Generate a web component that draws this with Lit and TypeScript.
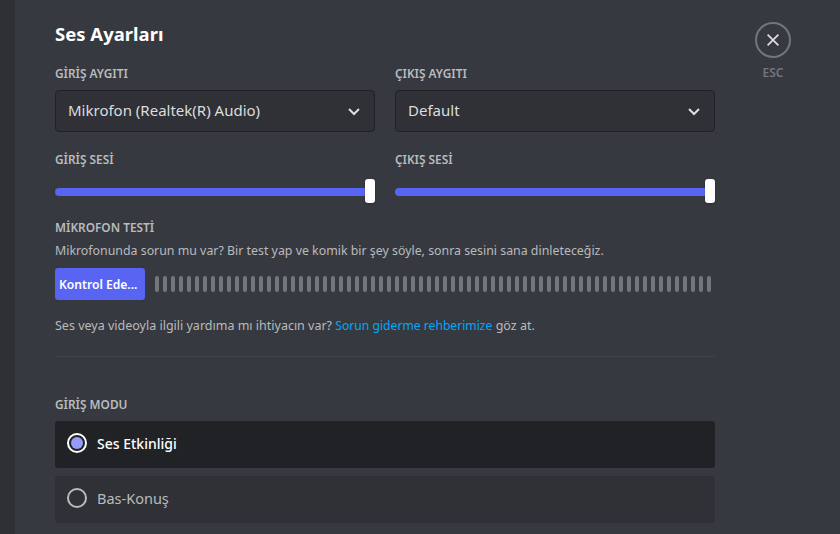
import { LitElement, html, css } from "lit";
import { customElement } from "lit/decorators.js";

const chevron = html`<svg class="chev" width="24" height="24" viewBox="0 0 24 24"><path fill="none" stroke="currentColor" stroke-width="2" d="M7 10l5 5 5-5"/></svg>`;

@customElement("app-root")
export class AppRoot extends LitElement {
  static styles = css`
    :host { display: block; width: 840px; height: 534px; overflow: hidden; background: #36393f; font-family: "Noto Sans", sans-serif; }
    * { box-sizing: border-box; }
    .page { display: flex; height: 534px; }
    .side { width: 15px; background: #2f3033; flex: none; }
    .main { width: 660px; margin-left: 40px; padding-top: 22px; flex: none; }
    .tools { margin-left: 40px; padding-top: 22px; width: 36px; display: flex; flex-direction: column; align-items: center; flex: none; }
    .close { width: 36px; height: 36px; border: 2px solid #72767d; border-radius: 50%; display: flex; align-items: center; justify-content: center; color: #dcddde; }
    .esc { margin-top: 7px; font-size: 12px; line-height: 16px; font-weight: 600; color: #72767d; }
    h1 { margin: 0; font-size: 18.5px; line-height: 24px; font-weight: 700; color: #fff; }
    .cols { display: grid; grid-template-columns: 320px 320px; gap: 20px; }
    .top { margin-top: 19px; }
    .label { font-size: 11.85px; line-height: 16px; font-weight: 600; color: #b9bbbe; }
    .select { margin-top: 9px; height: 42px; background: #2f3136; border: 1px solid #202225; border-radius: 4px; display: flex; align-items: center; justify-content: space-between; padding: 0 8px 2px 12px; font-size: 15px; color: #dcddde; }
    .chev { position: relative; top: 1px; }
    .vol { margin-top: 19px; }
    .slider { margin-top: 12px; height: 24px; position: relative; display: flex; align-items: center; }
    .track { width: 100%; height: 8px; border-radius: 4px; background: #5865f2; position: relative; top: 1px; }
    .grab { position: absolute; right: 0; top: 0; width: 10px; height: 24px; border-radius: 3px; background: #fff; box-shadow: 0 1px 2px rgba(0,0,0,.3); }
    .mic { margin-top: 16px; }
    .desc { margin-top: 6px; font-size: 12.37px; line-height: 20px; color: #b9bbbe; white-space: nowrap; }
    .test { margin-top: 7px; display: flex; align-items: center; gap: 10px; }
    .btn { width: 90px; height: 32px; border-radius: 3px; background: #5865f2; color: #fff; font-size: 12.1px; font-weight: 600; display: flex; align-items: center; padding-left: 4px; white-space: nowrap; }
    .bars { display: flex; gap: 4px; }
    .bar { width: 4px; height: 16px; border-radius: 2px; background: #72767d; }
    .desc.help { margin-top: 16px; font-size: 12.5px; }
    a { color: #00a8fc; text-decoration: none; font-size: 12.15px; }
    hr { margin: 20px 0 0; border: 0; height: 1px; background: #42454a; }
    .mode { margin-top: 39px; }
    .radio { height: 47px; border-radius: 3px; display: flex; align-items: center; padding: 0 0 3px 12px; gap: 10px; font-size: 14.5px; background: #2f3136; color: #b9bbbe; margin-top: 8px; }
    .radio.on { background: #202225; color: #fff; font-size: 14px; font-weight: 500; margin-top: 9px; }
    .dot { width: 20px; height: 20px; border-radius: 50%; border: 2px solid #b9bbbe; flex: none; display: flex; align-items: center; justify-content: center; }
    .on .dot { border-color: #fff; }
    .on .dot::after { content: ""; width: 12px; height: 12px; border-radius: 50%; background: #949cf7; }
  `;

  render() {
    return html`<div class="page">
      <div class="side"></div>
      <div class="main">
        <h1>Ses Ayarları</h1>
        <div class="cols top">
          <div><div class="label">GİRİŞ AYGITI</div><div class="select">Mikrofon (Realtek(R) Audio)${chevron}</div></div>
          <div><div class="label">ÇIKIŞ AYGITI</div><div class="select">Default${chevron}</div></div>
        </div>
        <div class="cols vol">
          <div><div class="label">GİRİŞ SESİ</div><div class="slider"><div class="track"></div><div class="grab"></div></div></div>
          <div><div class="label">ÇIKIŞ SESİ</div><div class="slider"><div class="track"></div><div class="grab"></div></div></div>
        </div>
        <div class="mic label">MİKROFON TESTİ</div>
        <div class="desc">Mikrofonunda sorun mu var? Bir test yap ve komik bir şey söyle, sonra sesini sana dinleteceğiz.</div>
        <div class="test">
          <div class="btn">Kontrol Ede...</div>
          <div class="bars">${Array.from({ length: 70 }, () => html`<div class="bar"></div>`)}</div>
        </div>
        <div class="desc help">Ses veya videoyla ilgili yardıma mı ihtiyacın var? <a>Sorun giderme rehberimize</a> göz at.</div>
        <hr />
        <div class="mode label">GİRİŞ MODU</div>
        <div class="radio on"><div class="dot"></div>Ses Etkinliği</div>
        <div class="radio"><div class="dot"></div>Bas-Konuş</div>
      </div>
      <div class="tools">
        <div class="close"><svg width="18" height="18" viewBox="0 0 24 24"><path fill="currentColor" d="M18.4 4L12 10.4 5.6 4 4 5.6 10.4 12 4 18.4 5.6 20 12 13.6 18.4 20 20 18.4 13.6 12 20 5.6z"/></svg></div>
        <div class="esc">ESC</div>
      </div>
    </div>`;
  }
}
